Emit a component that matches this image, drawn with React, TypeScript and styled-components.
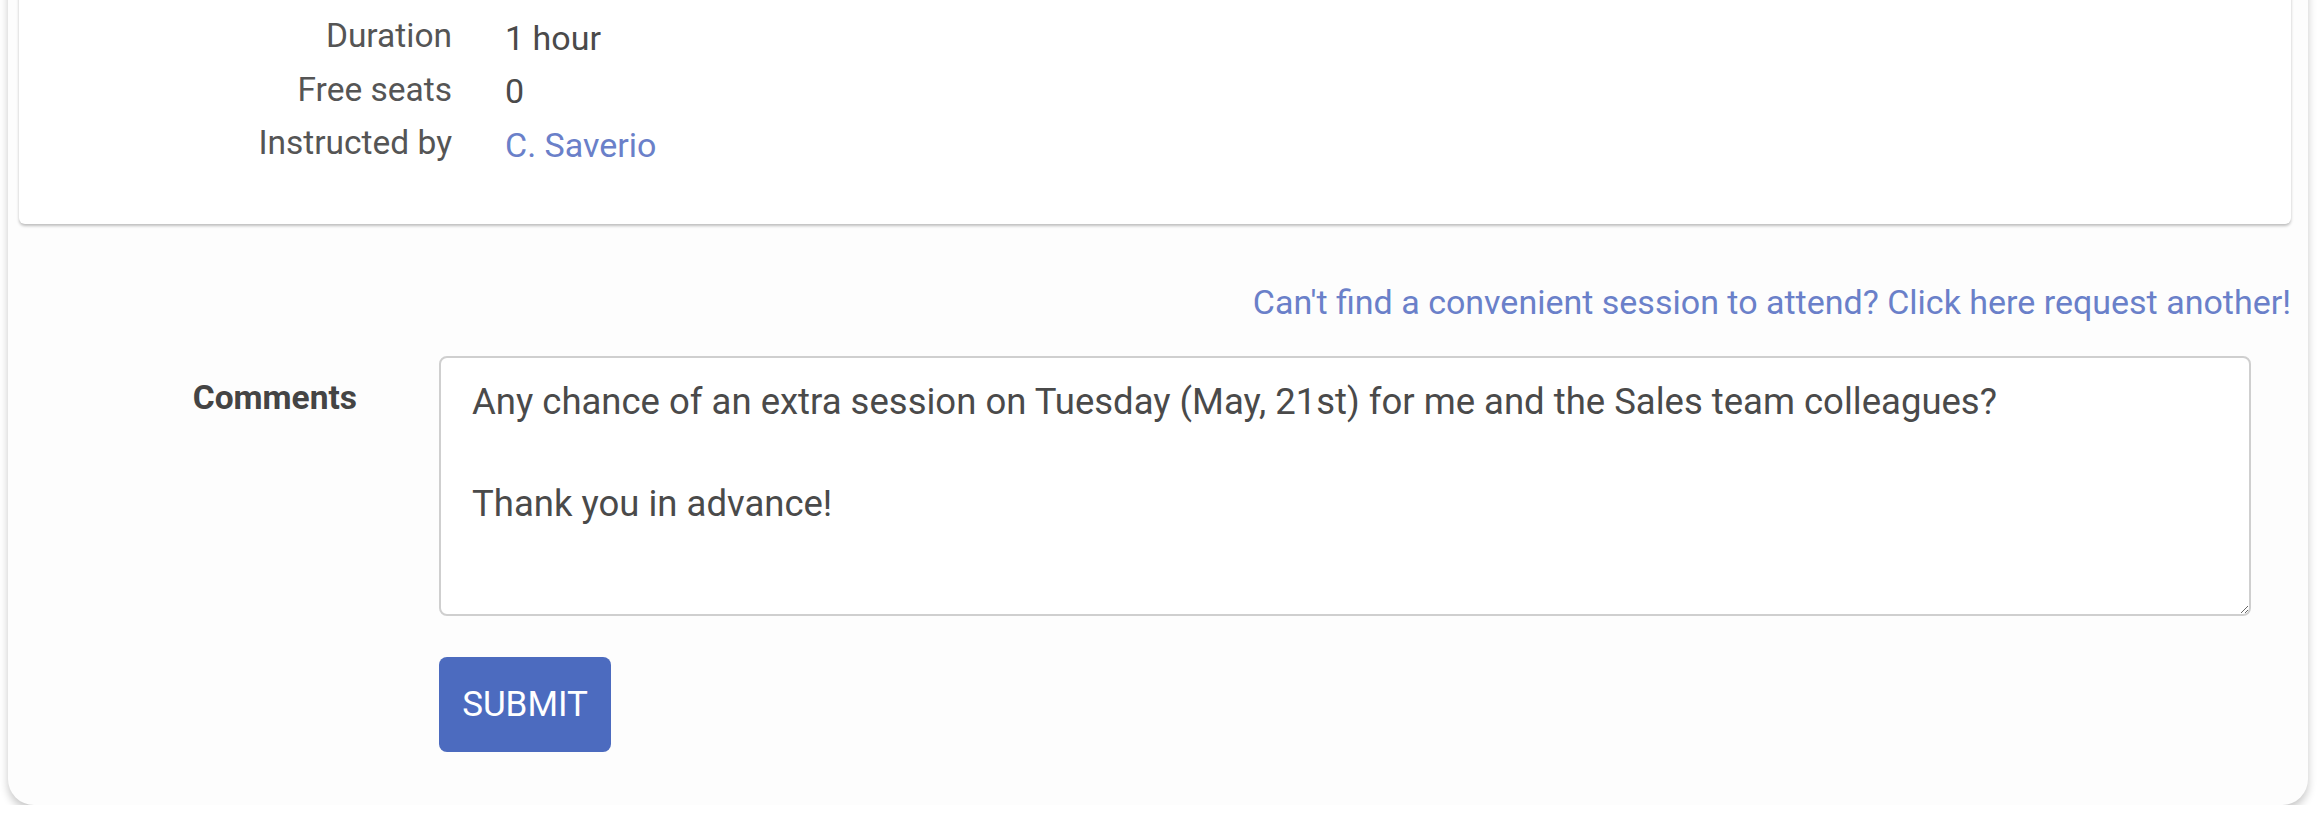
import styled, { createGlobalStyle } from "styled-components";

const GlobalStyle = createGlobalStyle`
  body {
    margin: 0;
    background: #ffffff;
    font-family: Roboto, "Liberation Sans", sans-serif;
    color: #4a4a4a;
  }
`;

const details = [
  { label: "Duration", value: "1 hour" },
  { label: "Free seats", value: "0" },
  { label: "Instructed by", value: "C. Saverio", link: true },
];

export default function App() {
  return (
    <>
      <GlobalStyle />
      <Sheet>
        <InfoCard>
          <InfoGrid>
            {details.map((d) => (
              <InfoRow key={d.label}>
                <InfoLabel>{d.label}</InfoLabel>
                <InfoValue $link={d.link}>{d.value}</InfoValue>
              </InfoRow>
            ))}
          </InfoGrid>
        </InfoCard>

        <RequestLink href="#">
          Can't find a convenient session to attend? Click here request another!
        </RequestLink>

        <Form onSubmit={(e) => e.preventDefault()}>
          <FieldLabel htmlFor="comments">Comments</FieldLabel>
          <Comments
            id="comments"
            defaultValue={
              "Any chance of an extra session on Tuesday (May, 21st) for me and the Sales team colleagues?\n\nThank you in advance!"
            }
          />
          <Actions>
            <SubmitButton type="submit">SUBMIT</SubmitButton>
          </Actions>
        </Form>
      </Sheet>
    </>
  );
}

const Sheet = styled.div`
  margin: -60px 16px 0 8px;
  padding: 0 17px 53px 11px;
  background: #fdfdfd;
  border-radius: 26px;
  box-shadow: 0 5px 9px rgba(0, 0, 0, 0.22);
  display: flex;
  flex-direction: column;
`;

const InfoCard = styled.div`
  background: #ffffff;
  border-radius: 0 0 6px 6px;
  box-shadow: 0 2px 3px rgba(0, 0, 0, 0.25);
  padding: 69px 0 54px;
`;

const InfoGrid = styled.div`
  display: flex;
  flex-direction: column;
`;

const InfoRow = styled.div`
  display: grid;
  grid-template-columns: 433px 1fr;
  column-gap: 53px;
  height: 53.5px;
  align-items: center;
`;

const InfoLabel = styled.div`
  text-align: right;
  font-size: 33.5px;
  color: #555555;
`;

const InfoValue = styled.div<{ $link?: boolean }>`
  font-size: 34px;
  padding-top: 4px;
  color: ${(p) => (p.$link ? "#6a80c9" : "#4a4a4a")};
`;

const RequestLink = styled.a`
  align-self: flex-end;
  margin-top: 56px;
  font-size: 34px;
  line-height: 44px;
  color: #6a80c9;
  text-decoration: none;
`;

const Form = styled.form`
  display: grid;
  grid-template-columns: 338px 1812px;
  column-gap: 82px;
  row-gap: 41px;
  margin-top: 32px;
`;

const FieldLabel = styled.label`
  text-align: right;
  font-size: 33.5px;
  font-weight: 700;
  color: #444444;
  line-height: 50px;
  padding-top: 17px;
`;

const Comments = styled.textarea`
  box-sizing: border-box;
  width: 1812px;
  height: 260px;
  padding: 18px 31px;
  border: 2px solid #cfcfcf;
  border-radius: 8px;
  background: #ffffff;
  font-family: Roboto, "Liberation Sans", sans-serif;
  font-size: 36.5px;
  line-height: 51px;
  color: #4a4a4a;
  outline: none;
`;

const Actions = styled.div`
  grid-column: 2;
`;

const SubmitButton = styled.button`
  width: 172px;
  height: 95px;
  border: none;
  border-radius: 8px;
  background: #4c6bbf;
  color: #ffffff;
  font-family: Roboto, "Liberation Sans", sans-serif;
  font-size: 35px;
  cursor: pointer;
`;
